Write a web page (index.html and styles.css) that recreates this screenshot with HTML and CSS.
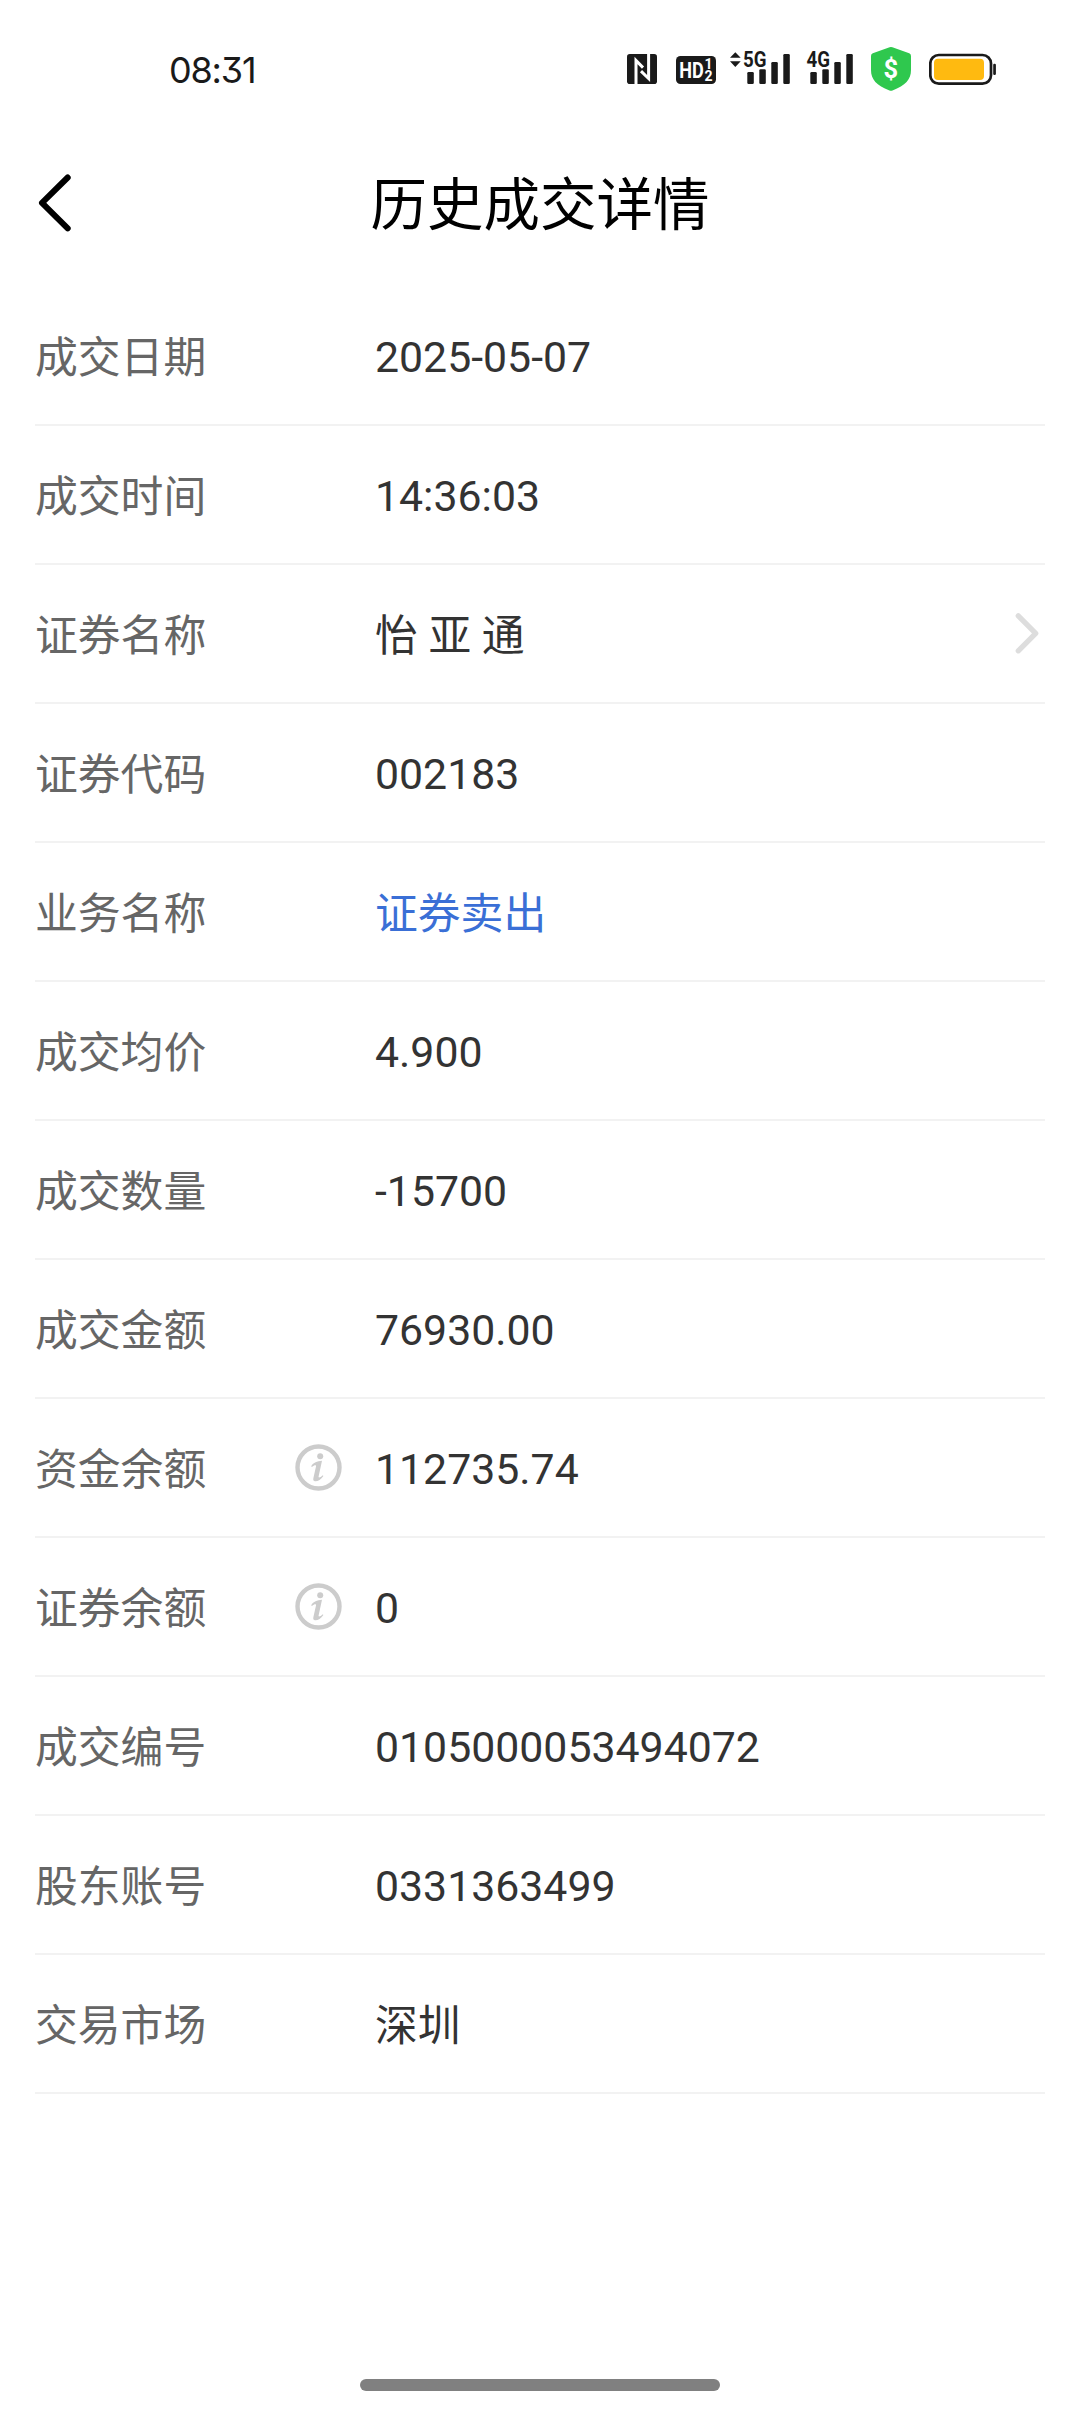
FILE: index.html
```html
<!DOCTYPE html>
<html lang="zh-CN">
<head>
<meta charset="utf-8">
<title>历史成交详情</title>
<link rel="stylesheet" href="styles.css">
</head>
<body>
<div class="screen">
  <div class="status">
    <span class="clock">08:31</span>
    <div class="status-icons">
      <svg width="30" height="46" viewBox="627 46 30 46">
        <rect x="627" y="54" width="30" height="30" rx="2.8" fill="#1a1a1a"/>
        <path d="M636 84V60.500L643 67.600M648.600 54V78.500L641 71.200" fill="none" stroke="#fff" stroke-width="3"/>
      </svg>
      <svg class="gap-hd" width="40" height="46" viewBox="676 46 40 46">
        <rect x="676" y="56" width="40" height="28" rx="4.5" fill="#1a1a1a"/>
        <g fill="#fff" class="glyph">
          <text x="679.3" y="78" font-size="21.8" textLength="24.5" lengthAdjust="spacingAndGlyphs">HD</text>
          <text x="704.600" y="69.300" font-size="14">1</text>
          <text x="704.600" y="81" font-size="14">2</text>
        </g>
      </svg>
      <svg class="gap-5g" width="60" height="46" viewBox="730 46 60 46" fill="#1a1a1a">
        <path d="M735.3 52.3l5.4 5.5h-10.8zM735.3 66.9l5.4-5.7h-10.8z"/>
        <text class="glyph" x="743" y="67.300" font-size="21.500" textLength="23.5" lengthAdjust="spacingAndGlyphs">5G</text>
        <rect x="747.3" y="72" width="6.5" height="12" rx="1.3"/>
        <rect x="759.3" y="69.3" width="6.5" height="14.7" rx="1.3"/>
        <rect x="771.3" y="62" width="6.5" height="22" rx="1.3"/>
        <rect x="783.3" y="54" width="6.5" height="30" rx="1.3"/>
      </svg>
      <svg class="gap-4g" width="47" height="46" viewBox="806 46 47 46" fill="#1a1a1a">
        <text class="glyph" x="806.6" y="67.300" font-size="21.500" textLength="23.5" lengthAdjust="spacingAndGlyphs">4G</text>
        <rect x="810.3" y="72" width="6.5" height="12" rx="1.3"/>
        <rect x="822.3" y="69.3" width="6.5" height="14.7" rx="1.3"/>
        <rect x="834.3" y="62" width="6.5" height="22" rx="1.3"/>
        <rect x="846.3" y="54" width="6.5" height="30" rx="1.3"/>
      </svg>
      <svg class="gap-shield" width="40" height="46" viewBox="871 46 40 46">
        <path d="M889.6 47.3q1.4-.5 2.8 0l16.8 6q1.8.7 1.8 2.6V70c0 9.500-5.500 15.500-18.500 20.400q-1.500.6-3 0C876.500 85.500 871 79.500 871 70V55.900q0-1.900 1.800-2.600z" fill="#2fc84e"/>
        <text class="glyph" x="883.600" y="77.900" font-size="25.500" fill="#fff">$</text>
      </svg>
      <svg class="gap-battery" width="68" height="46" viewBox="929 46 68 46">
        <rect x="930.300" y="55" width="60.700" height="28.700" rx="8.500" fill="none" stroke="#1a1a1a" stroke-width="2.700"/>
        <rect x="934" y="58.700" width="50" height="21.300" rx="4" fill="#ffba10"/>
        <rect x="993.200" y="63.700" width="2.700" height="11.300" rx="1.200" fill="#1a1a1a"/>
      </svg>
    </div>
  </div>

  <header class="header">
    <svg class="back" width="40" height="60" viewBox="35 172.500 40 60"><path d="M67.700 177L42 202.400l25.700 25.500" fill="none" stroke="#000" stroke-width="6" stroke-linecap="round" stroke-linejoin="round"/></svg>
    <h1 class="title">历史成交详情</h1>
  </header>

  <main class="list">
    <div class="row"><span class="label">成交日期</span><span class="value">2025-05-07</span></div>
    <div class="row"><span class="label">成交时间</span><span class="value">14:36:03</span></div>
    <div class="row"><span class="label">证券名称</span><span class="value han">怡 亚 通</span>
      <svg class="more" width="30" height="46" viewBox="1012 609.500 30 46"><path d="M1018.300 615.300l17.400 17.500-17.400 17.500" fill="none" stroke="#ddd" stroke-width="5.300" stroke-linecap="round" stroke-linejoin="round"/></svg>
    </div>
    <div class="row"><span class="label">证券代码</span><span class="value">002183</span></div>
    <div class="row"><span class="label">业务名称</span><span class="value han sell">证券卖出</span></div>
    <div class="row"><span class="label">成交均价</span><span class="value">4.900</span></div>
    <div class="row"><span class="label">成交数量</span><span class="value">-15700</span></div>
    <div class="row"><span class="label">成交金额</span><span class="value">76930.00</span></div>
    <div class="row"><span class="label">资金余额
      <svg class="info" width="47" height="47" viewBox="0 0 47 47"><use href="#info"/></svg></span><span class="value">112735.74</span></div>
    <div class="row"><span class="label">证券余额
      <svg class="info" width="47" height="47" viewBox="0 0 47 47"><use href="#info"/></svg></span><span class="value">0</span></div>
    <div class="row"><span class="label">成交编号</span><span class="value">0105000053494072</span></div>
    <div class="row"><span class="label">股东账号</span><span class="value">0331363499</span></div>
    <div class="row"><span class="label">交易市场</span><span class="value han">深圳</span></div>
  </main>

  <div class="home-bar"></div>
</div>
<svg class="defs" width="0" height="0">
  <symbol id="info" viewBox="0 0 47 47">
    <circle cx="23.500" cy="23.500" r="21" fill="none" stroke="#ccc" stroke-width="4.400"/>
    <circle cx="25.200" cy="12.200" r="3" fill="#ccc"/>
    <path d="M16.200 22.200C18.500 18.500 22 17.200 27 16.800L23.600 32.500C23.300 34.200 25.300 33.600 27.800 31.200L28.400 32C25.800 35.800 22.500 37.600 19.800 37.200C18.300 37 18 35.800 18.400 34L21 22.500C21.400 20.600 19.500 20.800 16.900 22.900Z" fill="#ccc"/>
  </symbol>
</svg>
</body>
</html>
```
FILE: styles.css
```css
* {
  box-sizing: border-box;
}

body {
  margin: 0;
  background: #fff;
  font-family: Roboto, "Noto Sans CJK SC", sans-serif;
}

.screen {
  display: flex;
  flex-direction: column;
  width: 1080px;
  height: 2412px;
}

svg {
  display: block;
  flex: none;
}

.defs {
  position: absolute;
}

.status {
  display: flex;
  justify-content: space-between;
  height: 120px;
  padding: 46px 83px 0 169px;
}

.clock {
  color: #1a1a1a;
  font-family: Inter, Roboto, sans-serif;
  font-size: 36px;
  line-height: 49px;
  letter-spacing: -1.2px;
  font-feature-settings: "cv09";
}

.status-icons {
  display: flex;
}

.glyph {
  font-family: Roboto, sans-serif;
  font-weight: 700;
}

.gap-hd { margin-left: 19px; }
.gap-5g { margin-left: 14px; }
.gap-4g { margin-left: 16px; }
.gap-shield { margin-left: 18px; }
.gap-battery { margin-left: 18px; }

.header {
  display: grid;
  grid-template-columns: 40px 1fr 40px;
  align-items: center;
  height: 167px;
  padding: 0 35px;
}

.back {
  margin-bottom: 2px;
}

.title {
  margin: 0;
  padding-top: 4px;
  color: #000;
  font-size: 56.5px;
  font-weight: 400;
  line-height: 80px;
  text-align: center;
}

.list {
  padding: 0 35px;
}

.row {
  display: flex;
  align-items: center;
  height: 139px;
  border-bottom: 2px solid #f2f2f2;
  font-size: 42.8px;
  line-height: 60px;
}

.label {
  display: flex;
  align-items: center;
  justify-content: space-between;
  width: 340px;
  padding-top: 4px;
  padding-right: 33px;
  color: #666;
}

.info {
  margin-top: -5px;
}

.value {
  flex: 1;
  padding-top: 2px;
  color: #333;
}

.han {
  padding-top: 4px;
}

.sell {
  color: #3a6fd6;
}

.more {
  margin: 0 3px 2px 0;
}

.home-bar {
  width: 360px;
  height: 12px;
  margin: auto auto 21px;
  border-radius: 6px;
  background: #808080;
}
```
